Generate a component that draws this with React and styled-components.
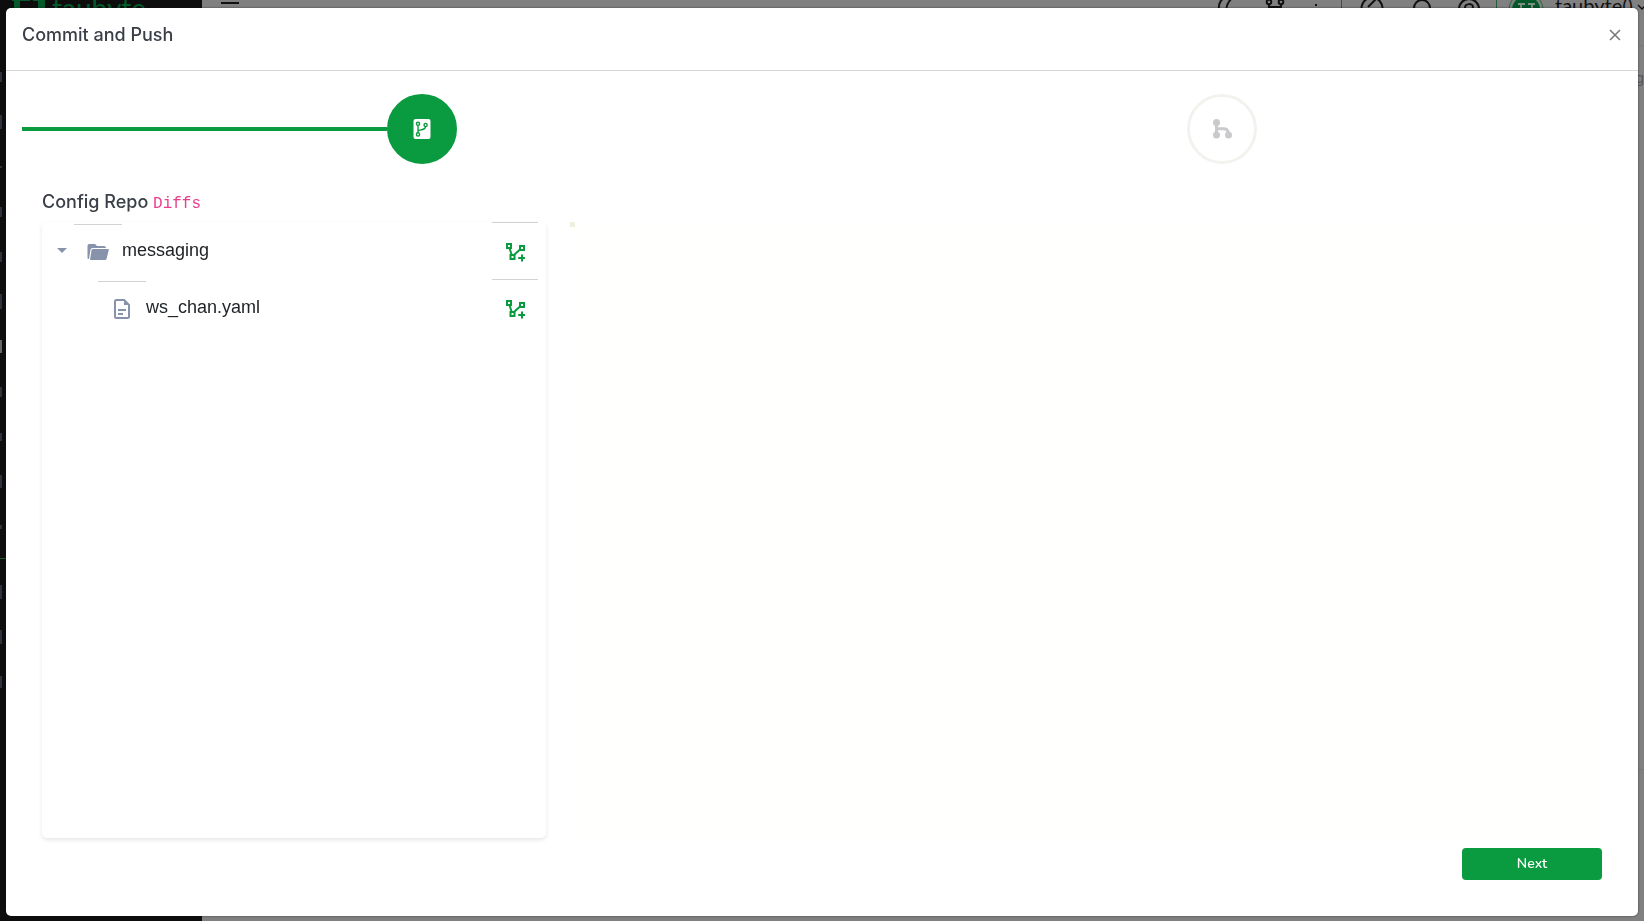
import React from "react";
import styled, { createGlobalStyle } from "styled-components";

const GREEN = "#0a9a3f";

const Global = createGlobalStyle`
  *, *::before, *::after { box-sizing: border-box; }
  html, body, #root { height: 100%; }
  body { margin: 0; overflow: hidden; background: #808080; font-family: Inter, "Liberation Sans", sans-serif; color: #3a3f47; }
  svg { flex: none; }
`;

const Shell = styled.div`
  display: flex;
  height: 100vh;
  overflow: hidden;
`;
const Sidebar = styled.aside`
  flex: 0 0 202px;
  background: #0d0d0d;
  overflow: hidden;
`;
const Brand = styled.div`
  display: flex;
  align-items: flex-start;
  gap: 6px;
  height: 44px;
  padding-left: 12px;
  color: #04592a;
  font: 400 28px/28px Lato, sans-serif;
`;
const BrandName = styled.span`
  margin-top: -6px;
`;
const SideNav = styled.nav`
  display: flex;
  flex-direction: column;
  padding-top: 10px;
`;
const SideItem = styled.span`
  display: flex;
  align-items: center;
  height: 45px;
  &::before {
    content: "";
    width: 2px;
    height: ${(p) => p.$size}px;
    background: ${(p) => (p.$current ? "#666" : "#2d323b")};
  }
`;
const SideDivider = styled.hr`
  width: 100%;
  height: 1px;
  margin: 9px 0 10px;
  border: 0;
  background: #1e5a26;
`;
const Main = styled.div`
  flex: 1;
  min-width: 0;
  display: flex;
  flex-direction: column;
`;
const TopBar = styled.header`
  display: flex;
  align-items: flex-start;
  justify-content: space-between;
  height: 46px;
  padding-left: 18px;
  border-bottom: 1px solid #787878;
  color: #111;
`;
const TopGroup = styled.div`
  display: flex;
  align-items: flex-start;
`;
const TopItem = styled.span`
  display: flex;
  justify-content: center;
  width: ${(p) => p.$width}px;
  height: 32px;
  border-right: 1px solid ${(p) => (p.$line ? "#285c36" : "transparent")};
`;
const UserName = styled.span`
  width: 82px;
  margin-top: -7px;
  font: 20px/24px Lato, sans-serif;
  white-space: nowrap;
`;
const Content = styled.div`
  height: 724px;
  padding-top: 22px;
  border-bottom: 1px solid #787878;
  text-align: right;
  font-size: 14px;
  line-height: 20px;
  color: #555;
`;

const Dialog = styled.section`
  position: fixed;
  inset: 8px 6px 5px;
  display: flex;
  flex-direction: column;
  background: #fff;
  border-radius: 5px;
  box-shadow: 0 0 2px rgba(20, 20, 30, 0.7);
`;
const DialogHeader = styled.header`
  display: flex;
  align-items: flex-start;
  justify-content: space-between;
  height: 63px;
  padding: 15px 16px;
  border-bottom: 1px solid #d6d6d6;
`;
const Title = styled.h1`
  margin: 0;
  font-size: 18px;
  line-height: 24px;
  font-weight: 500;
`;
const PlainButton = styled.button`
  display: flex;
  align-items: center;
  justify-content: center;
  border: 0;
  padding: 0;
  background: none;
  cursor: pointer;
`;
const Close = styled(PlainButton)`
  width: 14px;
  height: 24px;
  color: #777;
`;
const Steps = styled.ol`
  display: flex;
  list-style: none;
  margin: 0;
  padding: 23px 16px 0;
`;
const Step = styled.li`
  flex: 1;
  display: flex;
  align-items: center;
  &::before, &::after {
    content: "";
    flex: 1;
    height: 4px;
  }
  &::before { background: ${(p) => (p.$active ? GREEN : "transparent")}; }
`;
const StepDot = styled.span`
  display: flex;
  align-items: center;
  justify-content: center;
  width: 70px;
  height: 70px;
  border-radius: 50%;
  border: 3px solid ${(p) => (p.$active ? GREEN : "#f2f2ee")};
  background: ${(p) => (p.$active ? GREEN : "#fff")};
  color: ${(p) => (p.$active ? "#fff" : "#cacacc")};
`;
const Body = styled.div`
  flex: 1;
  display: flex;
  flex-direction: column;
  padding: 24px 36px 36px;
`;
const Heading = styled.h2`
  margin: 0 0 6px;
  font-size: 18px;
  line-height: 28px;
  font-weight: 500;
`;
const Code = styled.code`
  font: 400 16px/24px "Liberation Mono", monospace;
  color: #e83e8c;
`;
const Panes = styled.div`
  flex: 1;
  display: flex;
  gap: 24px;
`;
const Tree = styled.ul`
  flex: 0 0 504px;
  margin: 0;
  padding: 0 8px 0 12px;
  list-style: none;
  border-radius: 5px;
  box-shadow: 0 2px 4px rgba(0, 0, 0, 0.1);
  font-family: "Liberation Sans", Arial, sans-serif;
  font-size: 18px;
  color: #212529;
`;
const Row = styled.li`
  display: flex;
  height: 57px;
  padding-left: ${(p) => (p.$nested ? 44 : 0)}px;
`;
const Toggle = styled(PlainButton)`
  width: 20px;
  height: 58px;
  justify-content: flex-start;
  color: #8792ab;
`;
const RowIcon = styled.span`
  display: flex;
  align-items: center;
  justify-content: center;
  width: 48px;
  height: 54px;
  margin-top: 2px;
  border-top: 1px solid #d2d2d2;
  color: #8792ab;
`;
const RowName = styled.span`
  flex: 1;
  line-height: 56px;
`;
const Stage = styled(PlainButton)`
  width: 46px;
  height: 57px;
  padding-top: 2px;
  border-top: 1px solid #d2d2d2;
  color: ${GREEN};
`;
const DiffView = styled.div`
  flex: 1;
  background: #fffffd;
  &::before {
    content: "";
    display: block;
    width: 5px;
    height: 5px;
    background: #ebf1dd;
  }
`;
const Footer = styled.footer`
  display: flex;
  justify-content: flex-end;
  padding-top: 10px;
`;
const Next = styled(PlainButton)`
  width: 140px;
  height: 32px;
  border-radius: 4px;
  background: ${GREEN};
  color: #fff;
  font: 600 14px/32px Nunito, Lato, sans-serif;
`;

const Svg = ({ w = 24, h = w, children }) => (
  <svg width={w} height={h} viewBox={`0 0 ${w} ${h}`} fill="none" aria-hidden="true">
    {children}
  </svg>
);

const RepoIcon = () => (
  <Svg w={18} h={20}>
    <rect x="0.5" width="17" height="20" rx="2" fill="currentColor" />
    <g stroke={GREEN} strokeWidth="1.4">
      <circle cx="5" cy="4.8" r="1.6" />
      <circle cx="5" cy="15.4" r="1.6" />
      <circle cx="12.6" cy="6" r="1.6" />
      <path d="M5 6.4v7.4M12.6 7.6c0 3-3.3 3-7.4 3.8" />
    </g>
  </Svg>
);
const MergeIcon = () => (
  <Svg w={20} h={20}>
    <g fill="currentColor">
      <circle cx="4.5" cy="3.5" r="3.5" />
      <circle cx="4.5" cy="16" r="3.5" />
      <circle cx="16.5" cy="16" r="3.5" />
    </g>
    <path d="M4.5 4v12M4.5 9.8h7.2c3 0 4.2 1.5 4.6 4" stroke="currentColor" strokeWidth="3" />
  </Svg>
);
const PolylineAdd = () => (
  <Svg w={20} h={20}>
    <g stroke="currentColor" strokeWidth="2">
      <path d="M2 2h4v4H2zM15 4h4v4h-4zM5.5 13h4v4h-4z" />
      <path d="M4.500 6l2.200 7M15 7.500L9 13M17 12.500v7M13.200 16h7" />
    </g>
  </Svg>
);
const Folder = () => (
  <Svg w={22} h={16}>
    <path d="M2 0h6l2 2h7q2 0 2 2H5.500q-1.500 0-2 1.500L2 15Q.5 15 .5 14V2Q.5 0 2 0z" fill="currentColor" />
    <path d="M6 5h15q1 0 .8 1l-2.200 8.500Q19.200 16 18 16H3L4.500 6.200Q4.800 5 6 5z" fill="currentColor" />
  </Svg>
);
const FileIcon = () => (
  <Svg w={16} h={20}>
    <path d="M2.500 1h7.700L15 5.800v11.700q0 1.500-1.500 1.500h-11Q1 19 1 17.500v-15Q1 1 2.500 1z" stroke="currentColor" strokeWidth="2" />
    <path d="M10 1v5h5z" fill="currentColor" />
    <path d="M4 11h8M4 15h5" stroke="currentColor" strokeWidth="2" />
  </Svg>
);

const MAIN_MARKS = [10, 14, 2, 10, 10, 15, 13, 10, 8, 13, 4];
const EXTRA_MARKS = [14, 14, 12];

const HeaderIcons = () => (
  <>
    <TopItem $width={64}>
      <Svg w={24} h={20}><path d="M11-3A11 11 0 0 0 4 9M19-3Q12 1 11 10" stroke="currentColor" strokeWidth="2" /></Svg>
    </TopItem>
    <TopItem $width={32}>
      <Svg w={20} h={20}>
        <g stroke="currentColor" strokeWidth="2">
          <circle cx="4" cy="2" r="2.300" /><circle cx="16" cy="2" r="2.300" />
          <path d="M4 4v3h12V4M10 7v8" />
        </g>
      </Svg>
    </TopItem>
    <TopItem $width={51} $line>
      <Svg w={4} h={20}><path d="M1 4h2v2H1z" fill="currentColor" /></Svg>
    </TopItem>
    <TopItem $width={60}>
      <Svg w={24} h={20}><path d="M3 14A11 11 0 0 1 9-2M15-2a11 11 0 0 1 6 16M8 7l8-8" stroke="currentColor" strokeWidth="2" /></Svg>
    </TopItem>
    <TopItem $width={40}>
      <Svg w={22} h={20}><circle cx="11" cy="8" r="8" stroke="currentColor" strokeWidth="2" /></Svg>
    </TopItem>
    <TopItem $width={55} $line>
      <Svg w={24} h={22}>
        <circle cx="12" cy="9" r="10" stroke="currentColor" strokeWidth="2" />
        <path d="M8 8c0-5 8-5 8-1 0 3-4 3-4 6" stroke="currentColor" strokeWidth="2" />
      </Svg>
    </TopItem>
    <TopItem $width={58}>
      <Svg w={36} h={28}>
        <circle cx="18" cy="10" r="17" stroke="#1b6a34" />
        <circle cx="18" cy="10" r="14" fill="#04592a" />
        <path d="M10 4h7M13 4v5M20 4h7M24 4v5" stroke="#7e8f82" strokeWidth="2" />
      </Svg>
    </TopItem>
  </>
);

export default function App() {
  return (
    <>
      <Global />
      <Shell aria-hidden="true">
        <Sidebar>
          <Brand>
            <Svg w={34} h={10}>
              <path d="M0 0h18v1H8v9H2V1H0zM21 0h12v10h-7V1h-5z" fill="currentColor" />
            </Svg>
            <BrandName>taubyte</BrandName>
          </Brand>
          <SideNav>
            {MAIN_MARKS.map((size, i) => <SideItem key={i} $size={size} $current={i === 6} />)}
            <SideDivider />
            {EXTRA_MARKS.map((size, i) => <SideItem key={i} $size={size} />)}
          </SideNav>
        </Sidebar>
        <Main>
          <TopBar>
            <Svg w={20} h={6}><path d="M1 3h18" stroke="currentColor" strokeWidth="2" /></Svg>
            <TopGroup>
              <HeaderIcons />
              <UserName>taubyte()</UserName>
              <Svg w={7} h={12}><path d="M1 5l4 4 4-4" stroke="currentColor" strokeWidth="1.500" /></Svg>
            </TopGroup>
          </TopBar>
          <Content>g</Content>
        </Main>
      </Shell>

      <Dialog role="dialog" aria-modal="true" aria-labelledby="dialog-title">
        <DialogHeader>
          <Title id="dialog-title">Commit and Push</Title>
          <Close type="button" aria-label="Close">
            <Svg w={12}><path d="M1 1l10 10M11 1L1 11" stroke="currentColor" strokeWidth="1.500" /></Svg>
          </Close>
        </DialogHeader>
        <Steps>
          <Step $active><StepDot $active><RepoIcon /></StepDot></Step>
          <Step><StepDot><MergeIcon /></StepDot></Step>
        </Steps>
        <Body>
          <Heading>Config Repo <Code>Diffs</Code></Heading>
          <Panes>
            <Tree>
              <Row>
                <Toggle type="button" aria-label="Collapse messaging">
                  <Svg w={16} h={6}><path d="M3 0h10L8 5z" fill="currentColor" /></Svg>
                </Toggle>
                <RowIcon><Folder /></RowIcon>
                <RowName>messaging</RowName>
                <Stage type="button" aria-label="Stage messaging"><PolylineAdd /></Stage>
              </Row>
              <Row $nested>
                <RowIcon><FileIcon /></RowIcon>
                <RowName>ws_chan.yaml</RowName>
                <Stage type="button" aria-label="Stage ws_chan.yaml"><PolylineAdd /></Stage>
              </Row>
            </Tree>
            <DiffView />
          </Panes>
          <Footer><Next type="button">Next</Next></Footer>
        </Body>
      </Dialog>
    </>
  );
}
